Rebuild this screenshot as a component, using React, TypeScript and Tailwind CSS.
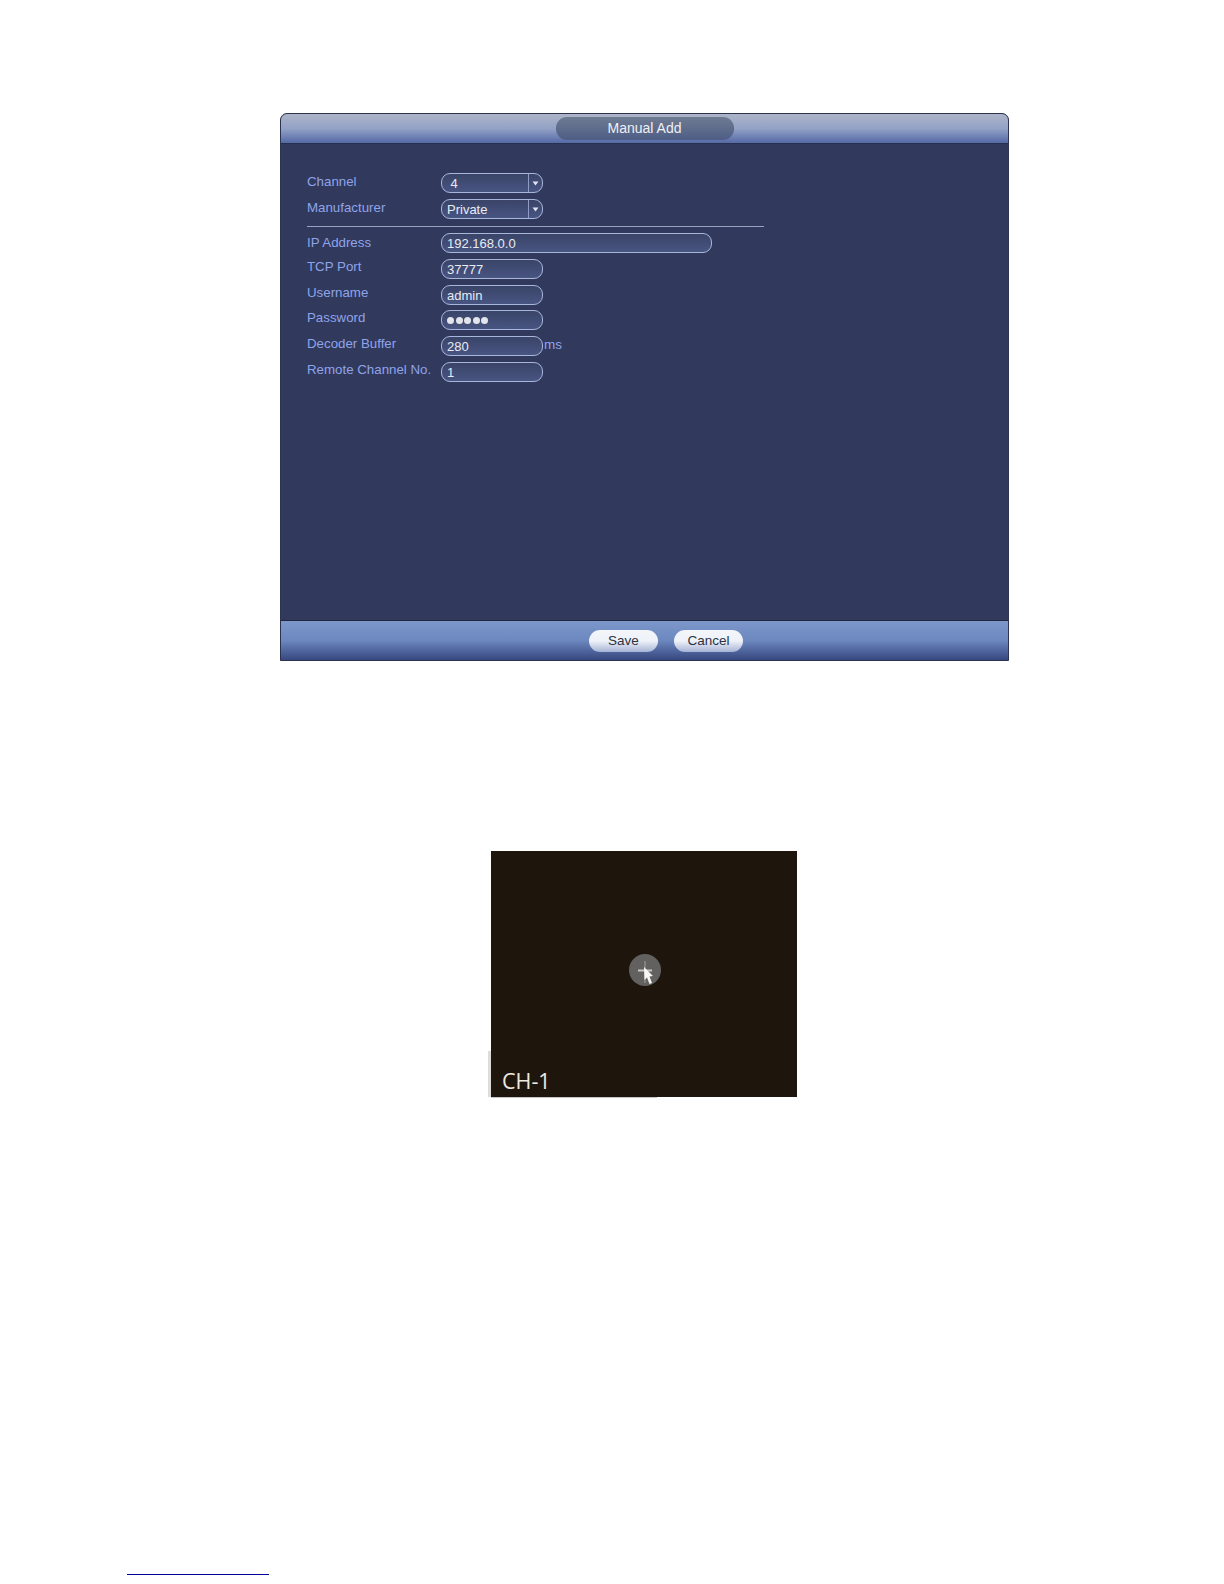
const inputCls =
  "flex h-[20px] items-center rounded-[9px] border-[1.5px] border-[#a9b6dc] bg-gradient-to-b from-[#3a4468] to-[#485582] pl-[5px] text-[13px] leading-none text-[#e8ebf2]";

function Label({ children, offset }: { children: React.ReactNode; offset: string }) {
  return <span className={`w-[134px] shrink-0 text-[13.3px] leading-none text-[#8fa4ea] ${offset}`}>{children}</span>;
}

function SelectBox({ value }: { value: string }) {
  return (
    <div className={`${inputCls} w-[102px] justify-between !pr-0`}>
      <span>{value}</span>
      <span className="flex h-full w-[14px] items-center justify-center border-l border-[#8f9cc6]">
        <svg width="7" height="5" viewBox="0 0 7 5">
          <path d="M0.5 0.5 H6.5 L3.5 4.5 Z" fill="#dfe4f2" />
        </svg>
      </span>
    </div>
  );
}

function TextRow({ label, value, suffix, mt }: { label: string; value: React.ReactNode; suffix?: string; mt: string }) {
  return (
    <div className={`flex items-center ${mt}`}>
      <Label offset="-translate-y-[2px]">{label}</Label>
      <div className={`${inputCls} w-[102px]`}>{value}</div>
      {suffix && <span className="-translate-y-[1px] pl-[1px] text-[13.5px] leading-none text-[#8fa4ea]">{suffix}</span>}
    </div>
  );
}

function DialogButton({ children }: { children: React.ReactNode }) {
  return (
    <button
      type="button"
      className="h-[22px] w-[69px] rounded-[11px] bg-gradient-to-b from-[#f4f6fb] via-[#eef1f8] to-[#a6b3d6] text-[13.5px] leading-none text-[#2c3242]"
    >
      {children}
    </button>
  );
}

export default function App() {
  return (
    <div className="flex h-[1584px] w-[1224px] flex-col bg-white font-['Liberation_Sans',Arial,sans-serif]">
      {/* DVR dialog */}
      <div className="ml-[280px] mt-[113px] flex h-[548px] w-[729px] flex-col overflow-hidden rounded-t-[7px] border border-[#2b3350] bg-[#31395c]">
        <div className="flex h-[30px] shrink-0 items-center justify-center border-b border-[#27304f] bg-gradient-to-b from-[#adb4c8] via-[#93a2c6] to-[#5569a6]">
          <div className="flex h-[23px] w-[178px] items-center justify-center rounded-[11px] bg-gradient-to-b from-[#6f7b92] to-[#4e5d85] pb-[2px] text-[14px] leading-none text-[#eef0f5]">
            Manual Add
          </div>
        </div>

        <div className="flex-1 pl-[26px] pt-[29px]">
          <div className="flex items-center">
            <Label offset="-translate-y-[1px]">Channel</Label>
            <SelectBox value="&nbsp;4" />
          </div>
          <div className="mt-[6px] flex items-center">
            <Label offset="-translate-y-[1px]">Manufacturer</Label>
            <SelectBox value="Private" />
          </div>
          <div className="mt-[7px] h-px w-[457px] bg-[#9aa3bd]" />
          <div className="mt-[6px] flex items-center">
            <Label offset="">IP Address</Label>
            <div className={`${inputCls} w-[271px]`}>192.168.0.0</div>
          </div>
          <TextRow label="TCP Port" value="37777" mt="mt-[6px]" />
          <TextRow label="Username" value="admin" mt="mt-[6px]" />
          <TextRow
            label="Password"
            mt="mt-[5px]"
            value={
              <span className="flex gap-[1.5px]">
                {[0, 1, 2, 3, 4].map((i) => (
                  <span key={i} className="h-[7px] w-[7px] rounded-full bg-[#e3e5ea]" />
                ))}
              </span>
            }
          />
          <TextRow label="Decoder Buffer" value="280" suffix="ms" mt="mt-[6px]" />
          <TextRow label="Remote Channel No." value="1" mt="mt-[6px]" />
        </div>

        <div className="flex h-[40px] shrink-0 items-center gap-[16px] border-t border-[#1f2640] bg-gradient-to-b from-[#7d97ca] via-[#6c88bf] to-[#37487f] pl-[308px]">
          <DialogButton>Save</DialogButton>
          <DialogButton>Cancel</DialogButton>
        </div>
      </div>

      {/* Channel preview */}
      <div className="relative ml-[491px] mt-[190px] flex h-[246px] w-[306px] flex-col items-center bg-[#1e160d]">
        <div className="ml-[2px] mt-[103px] h-[32px] w-[32px] rounded-full bg-[#62615f]">
          <svg width="32" height="32" viewBox="0 0 32 32">
            <path d="M16 7 V29" stroke="#8e8d8a" strokeWidth="1.5" />
            <path d="M9 16.5 H23" stroke="#c9c8c5" strokeWidth="2" />
            <path d="M15 13 L15.5 26 L18 23.5 L20.5 30 L23 29 L20.5 22.5 L24 22 Z" fill="#f6f6f4" />
          </svg>
        </div>
        <span className="absolute bottom-[2px] left-[11px] font-['Open_Sans',sans-serif] text-[21.5px] leading-[28px] text-[#eeeae2]">
          CH-1
        </span>
        <span className="absolute -left-[3px] bottom-0 h-[46px] w-[3px] bg-[#dcdcdc]" />
        <span className="absolute -bottom-[1px] left-0 h-[1px] w-[166px] bg-[#c4c4c4]" />
      </div>

      {/* Footnote rule */}
      <div className="ml-[127px] mt-[477px] h-px w-[142px] bg-[#00009c]" />
    </div>
  );
}
